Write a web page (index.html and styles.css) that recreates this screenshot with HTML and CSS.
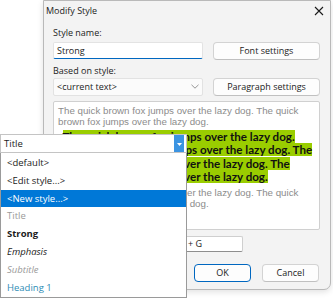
FILE: index.html
```html
<!DOCTYPE html>
<html>
<head>
<meta charset="utf-8">
<link rel="stylesheet" href="styles.css">
</head>
<body>
<div class="desk">
  <div class="dialog">
    <div class="titlebar">
      <span class="title">Modify Style</span>
      <svg class="close" width="10" height="10" viewBox="0 0 10 10"><path d="M1 1L9 9M9 1L1 9" stroke="#1a1a1a" stroke-width="1.1" fill="none"/></svg>
    </div>
    <div class="body">
      <div class="form">
        <div class="lbl">Style name:</div>
        <div></div>
        <div class="input focus">Strong</div>
        <div class="btn">Font settings</div>
        <div class="lbl">Based on style:</div>
        <div></div>
        <div class="select"><span>&lt;current text&gt;</span><svg width="8" height="5" viewBox="0 0 8 5"><path d="M0.5 0.8L4 4.2L7.5 0.8" stroke="#8a8a8a" stroke-width="0.9" fill="none"/></svg></div>
        <div class="btn">Paragraph settings</div>
      </div>
      <div class="preview">
        <p class="plain">The quick brown fox jumps over the lazy dog. The quick<br>brown fox jumps over the lazy dog.</p>
        <p class="hl"><mark>The quick brown fox jumps over the lazy dog.<br>The quick brown fox jumps over the lazy dog. The<br>quick brown fox jumps over the lazy dog. The<br>quick brown fox jumps over the lazy dog.</mark></p>
        <p class="plain">The quick brown fox jumps over the lazy dog. The quick<br>brown fox jumps over the lazy dog.</p>
      </div>
      <div class="shortcut">
        <span class="lbl">Shortcut key:</span>
        <div class="input sc">Ctrl + Shift + G</div>
      </div>
      <div class="actions">
        <div class="btn ok">OK</div>
        <div class="btn cancel">Cancel</div>
      </div>
    </div>
  </div>

  <div class="combo">
    <div class="combo-field">
      <span>Title</span>
      <span class="drop"><svg width="5" height="3" viewBox="0 0 5 3"><path d="M0 0H5L2.5 3Z" fill="#fff"/></svg></span>
    </div>
    <ul class="list">
      <li>&lt;default&gt;</li>
      <li>&lt;Edit style...&gt;</li>
      <li class="sel">&lt;New style...&gt;</li>
      <li class="s-title">Title</li>
      <li class="s-strong">Strong</li>
      <li class="s-emph">Emphasis</li>
      <li class="s-sub">Subtitle</li>
      <li class="s-h1">Heading 1</li>
    </ul>
  </div>
</div>
</body>
</html>
```

FILE: styles.css
```css
* { box-sizing: border-box; }
html, body { margin: 0; padding: 0; background: #fff; }
.desk {
  position: relative;
  width: 333px;
  height: 298px;
  overflow: hidden;
  font-family: "Open Sans", "Noto Sans", sans-serif;
  font-size: 9px;
  color: #1b1b1b;
}
.dialog {
  position: absolute;
  left: 43px;
  top: 0;
  width: 288px;
  height: 290px;
  background: #f3f3f3;
  border: 1px solid #b9b9b9;
  border-radius: 0 0 7px 7px;
  box-shadow: 0 2px 6px rgba(0,0,0,0.12);
  display: flex;
  flex-direction: column;
}
.titlebar {
  height: 20px;
  display: flex;
  align-items: center;
  justify-content: space-between;
  padding: 0 6px 0 2px;
}
.title { line-height: 12px; }
.close { display: block; }
.body {
  padding: 6px 9px 0 9px;
  display: flex;
  flex-direction: column;
}
.form {
  display: grid;
  grid-template-columns: 150px 107px;
  column-gap: 10px;
  align-items: center;
}
.lbl { line-height: 12px; }
.form .lbl:nth-of-type(1) { margin-bottom: 2.5px; }
.form > div:nth-child(5), .form > div:nth-child(6) { margin-top: 5px; margin-bottom: 1px; }
.input {
  height: 17px;
  background: #fff;
  border: 1px solid #e3e3e3;
  border-radius: 2px;
  padding: 0 3px;
  display: flex;
  align-items: center;
  line-height: 12px;
}
.input.focus { border-bottom: 1.5px solid #0067c0; }
.select {
  height: 18px;
  background: #fbfbfb;
  border: 1px solid #e2e2e2;
  border-radius: 2px;
  padding: 0 3px;
  display: flex;
  align-items: center;
  justify-content: space-between;
  line-height: 12px;
}
.btn {
  height: 18px;
  background: #fdfdfd;
  border: 1px solid #d3d3d3;
  border-bottom-color: #c0c0c0;
  border-radius: 4px;
  display: flex;
  align-items: center;
  justify-content: center;
  line-height: 12px;
}
.preview {
  margin-top: 5px;
  width: 267px;
  height: 129px;
  background: #fff;
  border: 1px solid #d0d0d0;
  border-radius: 2px;
  padding: 3px 4px 0 4px;
  overflow: hidden;
}
.preview p { margin: 0; }
.plain {
  font-family: "Liberation Sans", Arial, sans-serif;
  font-size: 9.75px;
  line-height: 11.5px;
  color: #8c8c8c;
  white-space: nowrap;
}
.hl {
  margin-top: 2px !important;
  margin-bottom: 3px !important;
  font-family: Lato, "Open Sans", sans-serif;
  font-weight: 700;
  font-size: 11.6px;
  line-height: 13.5px;
  color: #111;
  text-indent: 4.5px;
  white-space: nowrap;
}
.hl mark {
  background: #9acd00;
  color: #111;
}
.shortcut {
  margin-top: 6px;
  width: 190px;
  display: flex;
  align-items: center;
  justify-content: space-between;
}
.input.sc {
  width: 105px;
  height: 16px;
  border: 1px solid #cfcfcf;
  border-bottom-color: #8e8e8e;
}
.actions {
  margin-top: 12px;
  display: flex;
  justify-content: flex-end;
  gap: 11px;
  padding-right: 2px;
}
.ok, .cancel { width: 57px; }
.ok { border: 1.5px solid #0067c0; }

.combo {
  position: absolute;
  left: 0;
  top: 134px;
  width: 187px;
  font-family: "Open Sans", "Noto Sans", sans-serif;
  font-size: 9.5px;
}
.combo-field {
  height: 19px;
  background: #fff;
  border: 1px solid #c4c4c4;
  display: flex;
  align-items: center;
  justify-content: space-between;
  padding: 0 2px 0 3px;
  line-height: 12px;
}
.drop {
  width: 10px;
  height: 17px;
  background: #3b94e2;
  display: flex;
  align-items: center;
  justify-content: center;
}
.drop svg { display: block; margin-top: 1px; }
.list {
  list-style: none;
  margin: 0;
  padding: 1px 0 0 0;
  height: 145px;
  background: #fff;
  border: 1px solid #9a9a9a;
  border-top: none;
}
.list li {
  height: 17.8px;
  line-height: 17.8px;
  padding-left: 6px;
  color: #1b1b1b;
}
.list li.sel { background: #0078d7; color: #fff; }
.s-title { color: #9a9a9a !important; }
.s-strong { font-weight: 700; }
.s-emph { font-style: italic; }
.s-sub { font-style: italic; color: #9a9a9a !important; }
.s-h1 { color: #2e8db5 !important; }
```
